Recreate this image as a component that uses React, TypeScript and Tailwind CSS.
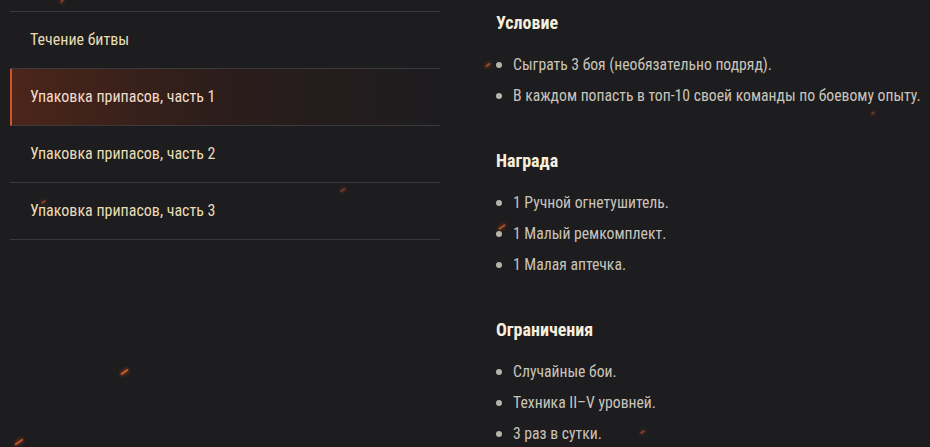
import React from "react";

const FONT = {
  fontFamily: '"Roboto Condensed", Roboto, "DejaVu Sans Condensed", sans-serif',
  fontStretch: "75%",
};

const MENU = [
  "Течение битвы",
  "Упаковка припасов, часть 1",
  "Упаковка припасов, часть 2",
  "Упаковка припасов, часть 3",
];

const SECTIONS: { title: string; items: string[] }[] = [
  {
    title: "Условие",
    items: [
      "Сыграть 3 боя (необязательно подряд).",
      "В каждом попасть в топ-10 своей команды по боевому опыту.",
    ],
  },
  {
    title: "Награда",
    items: ["1 Ручной огнетушитель.", "1 Малый ремкомплект.", "1 Малая аптечка."],
  },
  {
    title: "Ограничения",
    items: ["Случайные бои.", "Техника II–V уровней.", "3 раз в сутки."],
  },
];

// decorative embers flying over the page
const SPARKS = [
  { x: 120, y: 371, w: 9, o: 0.9 },
  { x: 14, y: 441, w: 10, o: 0.8 },
  { x: 485, y: 64, w: 6, o: 0.6 },
  { x: 498, y: 226, w: 8, o: 0.7 },
  { x: 340, y: 189, w: 6, o: 0.4 },
  { x: 41, y: 201, w: 5, o: 0.5 },
  { x: 871, y: 112, w: 4, o: 0.4 },
  { x: 640, y: 431, w: 5, o: 0.5 },
  { x: 60, y: 0, w: 4, o: 0.5 },
];

export default function App() {
  return (
    <div className="relative h-[447px] w-[930px] overflow-hidden bg-[#1d1c1f]" style={FONT}>
      <div className="flex">
        <nav className="ml-[10px] mt-[11px] w-[430px] shrink-0 border-t border-[#3a393c]">
          {MENU.map((label, i) => {
            const active = i === 1;
            return (
              <div
                key={label}
                className={
                  active
                    ? "flex h-[57px] items-center whitespace-nowrap border-b border-l-2 border-b-[#3a393c] border-l-[#c9572c] bg-gradient-to-r from-[#4c2519] via-[#2a1d1b] via-50% to-transparent pl-[18px] text-[16px] text-[#f2dccb]"
                    : "flex h-[57px] items-center whitespace-nowrap border-b border-[#3a393c] pl-[20px] text-[16px] text-[#e9dcb4]"
                }
              >
                {label}
              </div>
            );
          })}
        </nav>

        <div className="ml-[56px] flex flex-col gap-[43px] pt-[12px]">
          {SECTIONS.map((s) => (
            <section key={s.title}>
              <h3 className="text-[18px] font-bold leading-[22px] text-[#f6efdc]">{s.title}</h3>
              <ul className="mt-[20px] flex flex-col gap-[9px]">
                {s.items.map((it) => (
                  <li key={it} className="flex h-[22px] items-center whitespace-nowrap text-[15.7px] text-[#c9c4ba]">
                    <span className="mr-[11px] h-[6px] w-[6px] rounded-full bg-[#b9b4ab]" />
                    {it}
                  </li>
                ))}
              </ul>
            </section>
          ))}
        </div>
      </div>

      {SPARKS.map((s, i) => (
        <span
          key={i}
          className="pointer-events-none absolute h-[2px] -rotate-[35deg] rounded-full bg-[#e2622a] shadow-[0_0_4px_#ff6a20]"
          style={{ left: s.x, top: s.y, width: s.w, opacity: s.o }}
        />
      ))}
    </div>
  );
}
